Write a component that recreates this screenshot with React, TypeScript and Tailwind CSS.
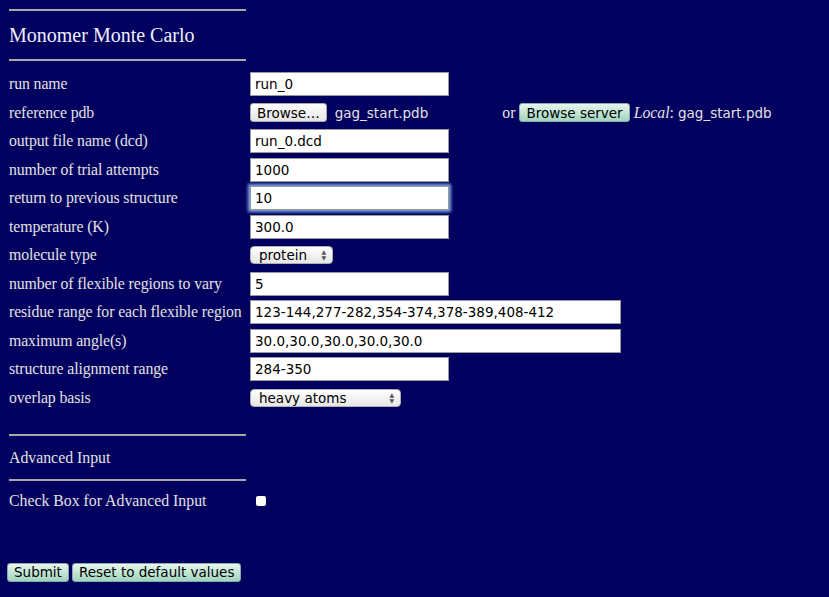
import React from "react";

const SANS = "font-[family-name:DejaVu_Sans,sans-serif]";

function Row({ label, children }: { label: string; children: React.ReactNode }) {
  return (
    <div className="flex items-center h-[28.5px]">
      <div className="w-[241px] shrink-0 text-[15.8px] text-[#e2e2e2] whitespace-nowrap tracking-[-0.1px]">{label}</div>
      <div className="flex items-center">{children}</div>
    </div>
  );
}

function Input({ value, wide, focus }: { value: string; wide?: boolean; focus?: boolean }) {
  return (
    <div
      className={`h-[24px] ${wide ? "w-[371px]" : "w-[199px]"} bg-white border border-[#9a9a9a] px-[4px] flex items-center text-[13.5px] text-black font-[family-name:DejaVu_Sans,sans-serif] ${focus ? "shadow-[0_0_3px_2px_#7fa9e6]" : ""}`}
    >
      {value}
    </div>
  );
}

function Select({ value, w }: { value: string; w: string }) {
  return (
    <div className={`h-[18px] ${w} bg-gradient-to-b from-white to-[#e6e6e6] rounded-[4px] border border-[#b0b0b0] flex items-center justify-between pl-[8px] pr-[6px] text-[13.5px] text-black font-[family-name:DejaVu_Sans,sans-serif]`}>
      <span className="whitespace-nowrap">{value}</span>
      <span className="text-[6px] leading-[6px] text-[#555] flex flex-col">
        <span>▲</span>
        <span>▼</span>
      </span>
    </div>
  );
}

function Btn({ children, green }: { children: React.ReactNode; green?: boolean }) {
  return (
    <div
      className={`h-[19px] px-[6px] flex items-center rounded-[3px] text-[13.5px] text-black whitespace-nowrap font-[family-name:DejaVu_Sans,sans-serif] border ${green ? "bg-gradient-to-b from-[#e8f6ef] to-[#9fd4bd] border-[#8aa]" : "bg-gradient-to-b from-white to-[#e4e4e4] border-[#aaa]"}`}
    >
      {children}
    </div>
  );
}

const Hr = () => <div className="w-[237px] h-[2px] bg-[#a8a8a8]" />;

export default function App() {
  return (
    <div className="w-[829px] h-[597px] bg-[#01005e] pl-[9px] pt-[9px] overflow-hidden font-[family-name:Liberation_Serif,serif]">
      <Hr />
      <div className="h-[48px] flex items-center text-[20px] text-[#eef]">Monomer Monte Carlo</div>
      <Hr />
      <div className="mt-[9px]">
        <Row label="run name"><Input value="run_0" /></Row>
        <Row label="reference pdb">
          <Btn>Browse…</Btn>
          <span className={`ml-[8px] text-[13.5px] text-[#e2e2e2] ${SANS}`}>gag_start.pdb</span>
          <span className="ml-[74px] text-[15.8px] text-[#e2e2e2]">or</span>
          <div className="ml-[4px]"><Btn green>Browse server</Btn></div>
          <span className="ml-[4px] text-[15.8px] text-[#e2e2e2]"><i>Local</i>:</span>
          <span className={`ml-[4px] text-[13.5px] text-[#e2e2e2] ${SANS}`}>gag_start.pdb</span>
        </Row>
        <Row label="output file name (dcd)"><Input value="run_0.dcd" /></Row>
        <Row label="number of trial attempts"><Input value="1000" /></Row>
        <Row label="return to previous structure"><Input value="10" focus /></Row>
        <Row label="temperature (K)"><Input value="300.0" /></Row>
        <Row label="molecule type"><Select value="protein" w="w-[83px]" /></Row>
        <Row label="number of flexible regions to vary"><Input value="5" /></Row>
        <Row label="residue range for each flexible region"><Input wide value="123-144,277-282,354-374,378-389,408-412" /></Row>
        <Row label="maximum angle(s)"><Input wide value="30.0,30.0,30.0,30.0,30.0" /></Row>
        <Row label="structure alignment range"><Input value="284-350" /></Row>
        <Row label="overlap basis"><Select value="heavy atoms" w="w-[151px]" /></Row>
      </div>
      <div className="mt-[22px]"><Hr /></div>
      <div className="h-[43px] flex items-center text-[15.8px] text-[#e2e2e2]">Advanced Input</div>
      <Hr />
      <div className="h-[40px] flex items-center">
        <span className="w-[247px] text-[15.8px] text-[#e2e2e2] whitespace-nowrap">Check Box for Advanced Input</span>
        <div className="w-[10px] h-[10px] bg-white rounded-[2px]" />
      </div>
      <div className="mt-[42px] flex gap-[3px] -ml-[2px]">
        <Btn green>Submit</Btn>
        <Btn green>Reset to default values</Btn>
      </div>
    </div>
  );
}
